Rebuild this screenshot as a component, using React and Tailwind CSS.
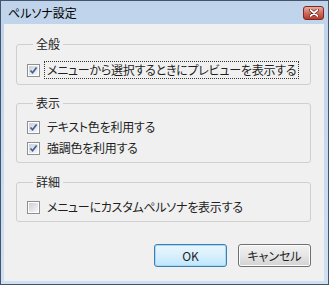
import React from 'react';

const font = { fontFamily: '"Noto Sans CJK JP", "Noto Sans", sans-serif' };

const CheckBox = ({ checked }) => (
  <div className="w-[13px] h-[13px] border border-[#8f8f8f] bg-white p-px shrink-0">
    <div className="w-full h-full bg-gradient-to-br from-[#cbcfd5] to-[#f7f8fa] relative">
      {checked && (
        <svg viewBox="0 0 9 9" className="absolute inset-0 w-full h-full">
          <path d="M1.5 4.5 L3.6 6.8 L7.6 1.6" fill="none" stroke="#3f5f9c" strokeWidth="1.7" />
        </svg>
      )}
    </div>
  </div>
);

const Row = ({ checked, focused, children }) => (
  <div className="flex items-center h-[18px]">
    <CheckBox checked={checked} />
    <span
      className={`ml-[4px] px-[2px] h-[18px] flex items-center text-[12px] leading-none tracking-[-0.25px] text-[#1e1e1e] border ${
        focused ? 'border-dotted border-[#333]' : 'border-transparent'
      }`}
    >
      {children}
    </span>
  </div>
);

const Group = ({ title, className, children }) => (
  <fieldset className={`border border-[#cfcfcf] rounded-[3px] ml-[12px] w-[295px] pl-[10px] ${className}`}>
    <legend className="ml-[6px] px-[3px] text-[12px] leading-[14px] text-[#1e1e1e]">{title}</legend>
    {children}
  </fieldset>
);

export default function App() {
  return (
    <div
      className="w-[329px] h-[285px] bg-gradient-to-b from-[#bfd3eb] to-[#cfe0f2] border border-[#44556b] pl-[3px] pr-[4px] pb-[3px] flex flex-col [font-feature-settings:'palt']"
      style={font}
    >
      {/* title bar */}
      <div className="h-[23px] flex items-center justify-between shrink-0">
        <span className="pl-[4px] text-[12px] text-black leading-none">ペルソナ設定</span>
        <div className="w-[21px] h-[14px] mt-[1px] rounded-[3px] border border-[#7a2a20] bg-gradient-to-b from-[#e8aca3] via-[#d26a5c] to-[#b73a2a] flex items-center justify-center">
          <svg viewBox="0 0 10 8" className="w-[10px] h-[8px]">
            <path d="M1.5 1 L8.5 7 M8.5 1 L1.5 7" stroke="#5a1a12" strokeWidth="3" strokeLinecap="round" />
            <path d="M1.5 1 L8.5 7 M8.5 1 L1.5 7" stroke="#ffffff" strokeWidth="1.7" strokeLinecap="round" />
          </svg>
        </div>
      </div>

      {/* content */}
      <div className="flex-1 bg-[#f0f0f0] pt-[13px] flex flex-col">
        <Group title="全般" className="pt-[10px] pb-[5px]">
          <Row checked focused>メニューから選択するときにプレビューを表示する</Row>
        </Group>

        <Group title="表示" className="mt-[11px] pt-[8px] pb-[5px]">
          <div className="flex flex-col gap-[3px]">
            <Row checked>テキスト色を利用する</Row>
            <Row checked>強調色を利用する</Row>
          </div>
        </Group>

        <Group title="詳細" className="mt-[12px] pt-[9px] pb-[5px]">
          <Row>メニューにカスタムペルソナを表示する</Row>
        </Group>

        <div className="flex justify-end gap-[11px] mr-[13px] mt-[22px]">
          <button className="w-[73px] h-[23px] rounded-[3px] border border-[#3c7fb1] bg-gradient-to-b from-[#eaf6fd] via-[#d9f0fc] to-[#bee6fd] shadow-[inset_0_0_0_1px_#a7d9f5] text-[12px] text-[#1e1e1e] leading-none">
            OK
          </button>
          <button className="w-[73px] h-[23px] rounded-[3px] border border-[#707070] bg-gradient-to-b from-[#f2f2f2] via-[#e6e6e6] to-[#d2d2d2] shadow-[inset_0_0_0_1px_#fcfcfc] text-[12px] text-[#1e1e1e] leading-none">
            キャンセル
          </button>
        </div>
      </div>
    </div>
  );
}
